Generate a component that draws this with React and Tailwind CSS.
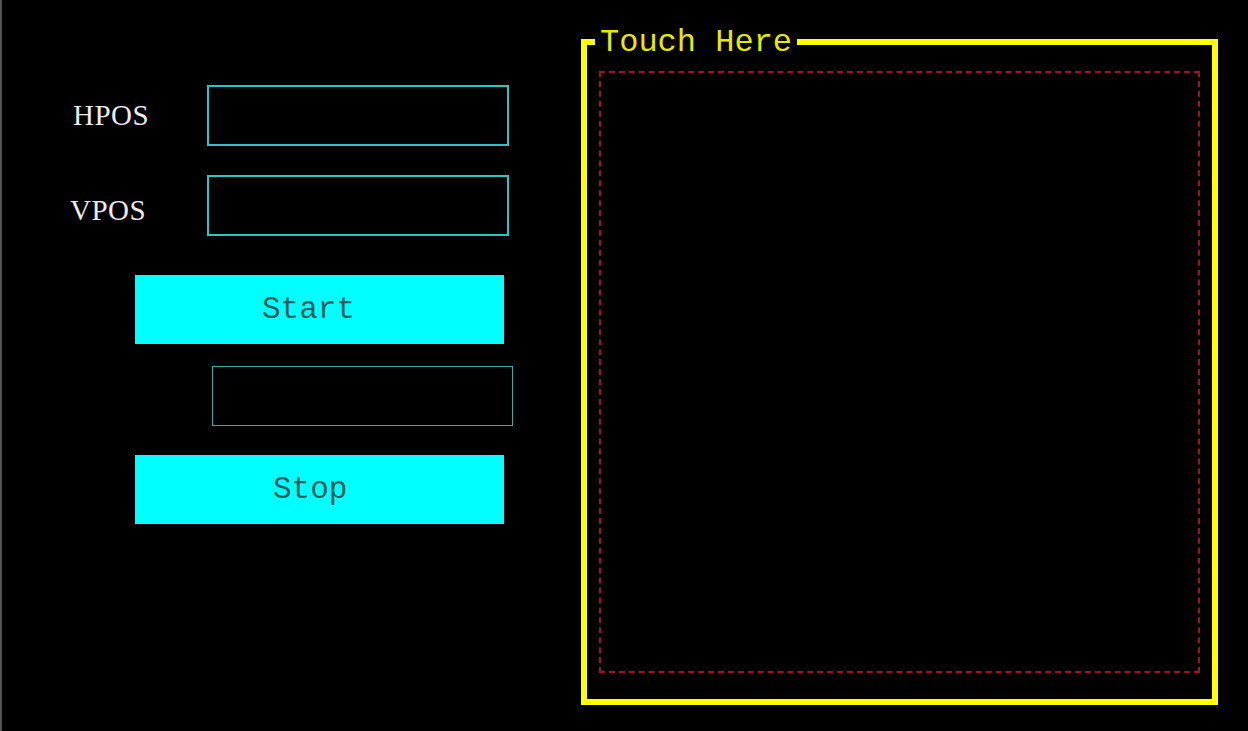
import React from "react";

export default function App() {
  const mono = { fontFamily: '"Liberation Mono", "Courier New", monospace' };
  return (
    <div className="w-[1248px] h-[731px] bg-black border-l-2 border-[#555555] flex overflow-hidden">
      <div className="w-[579px] shrink-0 pt-[85px]" style={{ fontFamily: '"Liberation Serif", "Times New Roman", serif' }}>
        <div className="flex items-center h-[61px]">
          <div className="ml-[71px] w-[134px] text-[29px] leading-none text-[#ececec] tracking-[0.5px]">HPOS</div>
          <input readOnly className="w-[302px] h-[61px] border-2 border-[#2cc4c4] bg-transparent outline-none" />
        </div>
        <div className="flex items-center h-[61px] mt-[29px]">
          <div className="ml-[68px] w-[137px] pt-[10px] text-[29px] leading-none text-[#ececec] tracking-[0.5px]">VPOS</div>
          <input readOnly className="w-[302px] h-[61px] border-2 border-[#2cc4c4] bg-transparent outline-none" />
        </div>
        <div
          className="ml-[133px] mt-[39px] w-[369px] h-[69px] bg-[#00ffff] flex items-center pl-[127px] text-[31px] leading-none text-[#2a5c5c]"
          style={mono}
        >
          Start
        </div>
        <input readOnly className="block ml-[210px] mt-[22px] w-[301px] h-[60px] border-[1.5px] border-[#3aacac] bg-transparent outline-none" />
        <div
          className="ml-[133px] mt-[29px] w-[369px] h-[69px] bg-[#00ffff] flex items-center pl-[138px] text-[31px] leading-none text-[#2a5c5c]"
          style={mono}
        >
          Stop
        </div>
      </div>
      <div className="mt-[39px] w-[637px] h-[666px] shrink-0 border-[6px] border-[#ffff00] relative px-[12px] pt-[26px] pb-[26px]">
        <span
          className="absolute left-[8px] top-[-18px] bg-black px-[5px] text-[32px] leading-none text-[#e8e800]"
          style={mono}
        >
          Touch Here
        </span>
        <div className="w-full h-full border-2 border-dashed border-t-[#a0102a] border-r-[#a0102a] border-b-[#a0102a] border-l-[#a0102a]" />
      </div>
    </div>
  );
}
